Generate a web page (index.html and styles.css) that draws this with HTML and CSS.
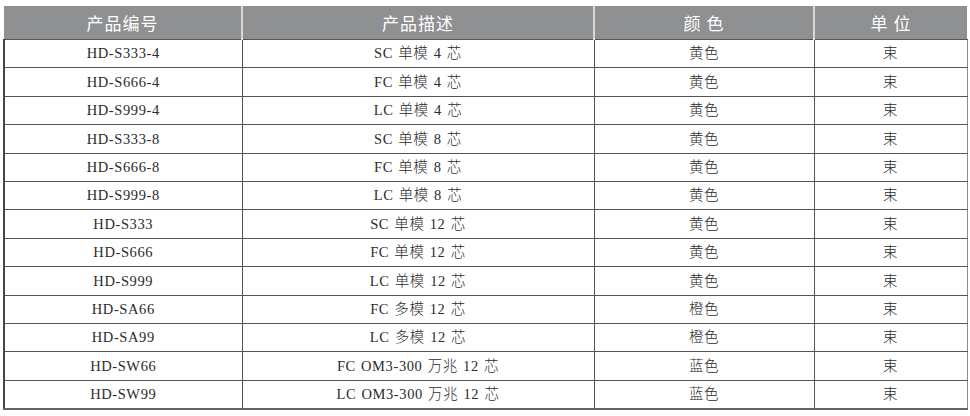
FILE: index.html
```
<!DOCTYPE html>
<html lang="zh-CN">
<head>
<meta charset="utf-8">
<title>产品列表</title>
<link rel="stylesheet" href="styles.css">
</head>
<body>
<table class="spec">
  <colgroup>
    <col class="c1"><col class="c2"><col class="c3"><col class="c4">
  </colgroup>
  <thead>
    <tr><th>产品编号</th><th>产品描述</th><th>颜 色</th><th>单 位</th></tr>
  </thead>
  <tbody>
    <tr><td>HD-S333-4</td><td>SC 单模 4 芯</td><td>黄色</td><td>束</td></tr>
    <tr><td>HD-S666-4</td><td>FC 单模 4 芯</td><td>黄色</td><td>束</td></tr>
    <tr><td>HD-S999-4</td><td>LC 单模 4 芯</td><td>黄色</td><td>束</td></tr>
    <tr><td>HD-S333-8</td><td>SC 单模 8 芯</td><td>黄色</td><td>束</td></tr>
    <tr><td>HD-S666-8</td><td>FC 单模 8 芯</td><td>黄色</td><td>束</td></tr>
    <tr><td>HD-S999-8</td><td>LC 单模 8 芯</td><td>黄色</td><td>束</td></tr>
    <tr><td>HD-S333</td><td>SC 单模 12 芯</td><td>黄色</td><td>束</td></tr>
    <tr><td>HD-S666</td><td>FC 单模 12 芯</td><td>黄色</td><td>束</td></tr>
    <tr><td>HD-S999</td><td>LC 单模 12 芯</td><td>黄色</td><td>束</td></tr>
    <tr><td>HD-SA66</td><td>FC 多模 12 芯</td><td>橙色</td><td>束</td></tr>
    <tr><td>HD-SA99</td><td>LC 多模 12 芯</td><td>橙色</td><td>束</td></tr>
    <tr><td>HD-SW66</td><td>FC OM3-300 万兆 12 芯</td><td>蓝色</td><td>束</td></tr>
    <tr><td>HD-SW99</td><td>LC OM3-300 万兆 12 芯</td><td>蓝色</td><td>束</td></tr>
  </tbody>
</table>
</body>
</html>
```
FILE: styles.css
```
html, body {
  margin: 0;
  background: #ffffff;
}
body {
  padding: 6px 4px 0 3px;
}
.spec {
  width: 963px;
  border-collapse: collapse;
  table-layout: fixed;
  font-family: "Liberation Serif", "Noto Sans CJK SC", serif;
  color: #2b2b2b;
}
.c1 { width: 238px; }
.c2 { width: 352px; }
.c3 { width: 220px; }
.c4 { width: 153px; }
.spec th {
  height: 33px;
  padding: 0;
  background: #8f9092;
  color: #ffffff;
  font-family: "Noto Sans CJK SC", sans-serif;
  font-weight: normal;
  font-size: 17px;
  letter-spacing: 1px;
  text-align: center;
  border-left: 2px solid #d8d8d8;
  border-bottom: 1px solid #555555;
}
.spec th:first-child {
  border-left: none;
}
.spec td {
  height: 27.4px;
  padding: 0;
  font-size: 14.5px;
  font-weight: 300;
  letter-spacing: 0.6px;
  word-spacing: 1px;
  text-align: center;
  border: 1px solid #555555;
  line-height: 1;
}
.spec td:first-child {
  border-left: 2px solid #444444;
}
.spec td:last-child {
  border-right: 1px solid #8a8a8a;
}
.spec tbody tr:last-child td {
  border-bottom: 2px solid #666666;
}
```
